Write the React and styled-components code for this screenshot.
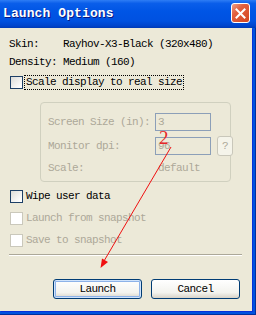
import styled, { createGlobalStyle } from "styled-components";

const GlobalStyle = createGlobalStyle`
  html, body {
    margin: 0;
    padding: 0;
    background: #ece9d8;
  }
  body {
    width: 256px;
    height: 315px;
    overflow: hidden;
    font-family: "Liberation Mono", "DejaVu Sans Mono", monospace;
  }
`;

const Window = styled.div`
  position: relative;
  width: 256px;
  height: 315px;
  display: flex;
  flex-direction: column;
`;

const TitleBar = styled.div`
  height: 28px;
  flex: none;
  display: flex;
  align-items: center;
  justify-content: space-between;
  padding: 0 6px 0 3px;
  box-sizing: border-box;
  background: linear-gradient(
    to bottom,
    #2e7df5 0%,
    #0a5eea 12%,
    #0055e5 40%,
    #0051e0 75%,
    #0044cc 92%,
    #003ab5 100%
  );
`;

const Title = styled.span`
  color: #fff;
  font-weight: bold;
  font-size: 13px;
  letter-spacing: 0.1px;
  text-shadow: 1px 1px 0 #0a1883;
  margin-top: -1px;
`;

const CloseButton = styled.div`
  width: 19px;
  height: 20px;
  box-sizing: border-box;
  border: 1px solid #fff;
  border-radius: 3px;
  background: linear-gradient(135deg, #f0a08a 0%, #e2603f 35%, #d4451f 100%);
  display: flex;
  align-items: center;
  justify-content: center;
  margin-top: -2px;
`;

const Frame = styled.div`
  flex: 1;
  display: flex;
  background: #0052e0;
  padding: 0 4px 4px 0;
  box-shadow: inset -1px -1px 0 #00309c;
`;

const Body = styled.div`
  flex: 1;
  background: #ece9d8;
  display: flex;
  flex-direction: column;
  padding: 7px 10px 0 9px;
  font-size: 11px;
  letter-spacing: -0.6px;
  color: #000;
  box-shadow: 1px 1px 0 #0831d9;
`;

const InfoGrid = styled.div`
  display: grid;
  grid-template-columns: 54px 1fr;
  grid-auto-rows: 18px;
  align-items: center;
`;

const CheckRow = styled.label`
  display: flex;
  align-items: center;
  height: 14px;
  margin-top: ${(p) => p.$top}px;
  margin-left: 1px;
  color: ${(p) => (p.$disabled ? "#aca899" : "#000")};
`;

const Box = styled.span`
  width: 13px;
  height: 13px;
  box-sizing: border-box;
  flex: none;
  border: 1px solid ${(p) => (p.$disabled ? "#cac8bb" : "#1c3f66")};
  background: ${(p) =>
    p.$disabled ? "#fff" : "linear-gradient(135deg, #dcdcd7 0%, #fff 90%)"};
  margin-right: 2px;
`;

const CheckText = styled.span`
  line-height: 13px;
  padding: 0 1px;
  outline: ${(p) => (p.$focus ? "1px dotted #000" : "none")};
`;

const GroupBox = styled.div`
  margin: 13px 11px 0 31px;
  border: 1px solid #d0d0bf;
  border-radius: 4px;
  padding: 10px 0 6px 7px;
  display: grid;
  grid-template-columns: 107px 56px 16px;
  grid-template-rows: 18px 18px 14px;
  row-gap: 6px;
  align-items: center;
  color: #aca899;
`;

const Field = styled.div`
  height: 18px;
  box-sizing: border-box;
  border: 1px solid #8c9fb8;
  background: #ece9d8;
  padding-left: 2px;
  display: flex;
  align-items: center;
  color: #aca899;
`;

const HelpButton = styled.div`
  width: 16px;
  height: 20px;
  margin-left: 6px;
  box-sizing: border-box;
  border: 1px solid #c9c7ba;
  border-radius: 3px;
  background: #f5f4ea;
  display: flex;
  align-items: center;
  justify-content: center;
  color: #aca899;
`;

const ScaleValue = styled.span`
  padding-left: 3px;
  grid-column: 2 / 4;
`;

const Separator = styled.div`
  margin-top: 7px;
  height: 1px;
  background: #aca899;
  border-bottom: 1px solid #fff;
`;

const ButtonRow = styled.div`
  display: flex;
  justify-content: flex-end;
  gap: 9px;
  margin-top: 23px;
  padding-right: 2px;
`;

const Button = styled.div`
  width: 89px;
  height: 20px;
  box-sizing: border-box;
  border: 1px solid #003c74;
  border-radius: 3px;
  background: linear-gradient(#ffffff 0%, #f3f3ee 70%, #d8d3c8 100%);
  display: flex;
  align-items: center;
  justify-content: center;
  color: #000;
  box-shadow: ${(p) =>
    p.$default ? "inset 0 0 0 1px #cfe3fc, inset 0 0 0 2px #8db2e8" : "none"};
`;

const Mark = styled.span`
  position: absolute;
  left: 159px;
  top: 128px;
  font-family: "Liberation Serif", serif;
  font-size: 19px;
  line-height: 19px;
  color: #e8262a;
  letter-spacing: 0;
`;

const Overlay = styled.svg`
  position: absolute;
  left: 0;
  top: 0;
  pointer-events: none;
`;

export default function App() {
  return (
    <Window>
      <GlobalStyle />
      <TitleBar>
        <Title>Launch Options</Title>
        <CloseButton>
          <svg width="11" height="11" viewBox="0 0 11 11">
            <path d="M1.5 1.5 L9.5 9.5 M9.5 1.5 L1.5 9.5" stroke="#fff" strokeWidth="2" strokeLinecap="square" />
          </svg>
        </CloseButton>
      </TitleBar>
      <Frame>
        <Body>
          <InfoGrid>
            <span>Skin:</span>
            <span>Rayhov-X3-Black (320x480)</span>
            <span>Density:</span>
            <span>Medium (160)</span>
          </InfoGrid>
          <CheckRow $top={4}>
            <Box />
            <CheckText $focus>Scale display to real size</CheckText>
          </CheckRow>
          <GroupBox>
            <span>Screen Size (in):</span>
            <Field>3</Field>
            <span />
            <span>Monitor dpi:</span>
            <Field>96</Field>
            <HelpButton>?</HelpButton>
            <span>Scale:</span>
            <ScaleValue>default</ScaleValue>
          </GroupBox>
          <CheckRow $top={7}>
            <Box />
            <CheckText>Wipe user data</CheckText>
          </CheckRow>
          <CheckRow $top={8} $disabled>
            <Box $disabled />
            <CheckText>Launch from snapshot</CheckText>
          </CheckRow>
          <CheckRow $top={8} $disabled>
            <Box $disabled />
            <CheckText>Save to snapshot</CheckText>
          </CheckRow>
          <Separator />
          <ButtonRow>
            <Button $default>Launch</Button>
            <Button>Cancel</Button>
          </ButtonRow>
        </Body>
      </Frame>
      <Mark>2</Mark>
      <Overlay width="256" height="315">
        <line x1="171" y1="147" x2="104" y2="261" stroke="#f01010" strokeWidth="1" />
        <polygon points="100.5,268 108,262 102,258.4" fill="#f01010" />
      </Overlay>
    </Window>
  );
}
